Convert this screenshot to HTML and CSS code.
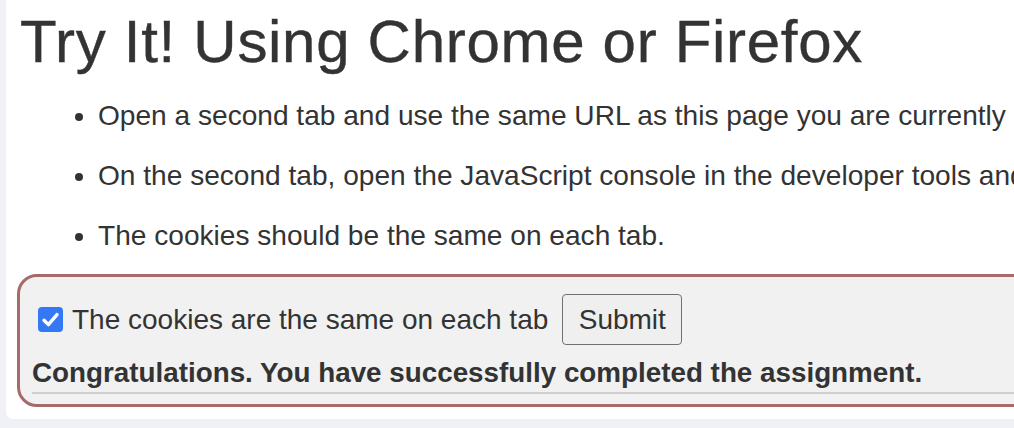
FILE: index.html
```html
<!DOCTYPE html>
<html>
<head>
<meta charset="utf-8">
<link rel="stylesheet" href="styles.css">
</head>
<body>
<div class="page">
  <h1 class="title">Try It! Using Chrome or Firefox</h1>
  <ul class="steps">
    <li>Open a second tab and use the same URL as this page you are currently using.</li>
    <li>On the second tab, open the JavaScript console in the developer tools and type: document.cookie</li>
    <li>The cookies should be the same on each tab.</li>
  </ul>
  <form class="attack">
    <div class="row">
      <label class="check">
        <span class="box"><svg width="25" height="25" viewBox="0 0 25 25"><rect x="0" y="0" width="25" height="25" rx="4" fill="#3478f6"/><path d="M6 13.2 L10.4 17.6 L19 7.6" fill="none" stroke="#fff" stroke-width="3.4" stroke-linecap="round" stroke-linejoin="round"/></svg></span>
        <span class="label-text">The cookies are the same on each tab</span>
      </label>
      <button type="button" class="submit">Submit</button>
    </div>
    <div class="feedback">Congratulations. You have successfully completed the assignment.</div>
  </form>
</div>
</body>
</html>
```
FILE: styles.css
```css
html, body {
  margin: 0;
  padding: 0;
  background: #f0f1f7;
  overflow: hidden;
}
.page {
  margin-left: 6px;
  width: 1500px;
  height: 419px;
  background: #fff;
  border-bottom-left-radius: 7px;
  padding: 6px 0 0 14px;
  box-sizing: border-box;
  font-family: "Liberation Sans", Arial, sans-serif;
  color: #333;
}
.title {
  margin: 0;
  font-size: 60px;
  line-height: 72px;
  font-weight: 400;
  letter-spacing: 0.7px;
  -webkit-text-stroke: 0.4px #333;
}
.steps {
  margin: 20px 0 20px 0;
  padding-left: 78px;
  font-size: 28.1px;
  line-height: 36px;
}
.steps li {
  margin-bottom: 24px;
  white-space: nowrap;
}
.steps li:last-child { margin-bottom: 0; }
.attack {
  margin: 0 0 0 -3px;
  border: 3px solid #a66b69;
  border-radius: 20px;
  background: #f1f1f1;
  height: 133px;
  box-sizing: border-box;
  padding: 17px 0 0 12px;
}
.row {
  display: flex;
  align-items: center;
  gap: 14px;
}
.check {
  display: flex;
  align-items: center;
  gap: 9px;
  font-size: 28px;
  padding-left: 6px;
}
.box { display: flex; }
.submit {
  font-family: inherit;
  font-size: 28px;
  color: #333;
  background: #efefef;
  border: 1.5px solid #707070;
  border-radius: 4px;
  width: 120px;
  height: 51px;
  padding: 0;
}
.feedback {
  margin-top: 12px;
  font-size: 27.8px;
  font-weight: bold;
  padding-bottom: 3px;
  border-bottom: 2px solid #cfcfcf;
}
```
